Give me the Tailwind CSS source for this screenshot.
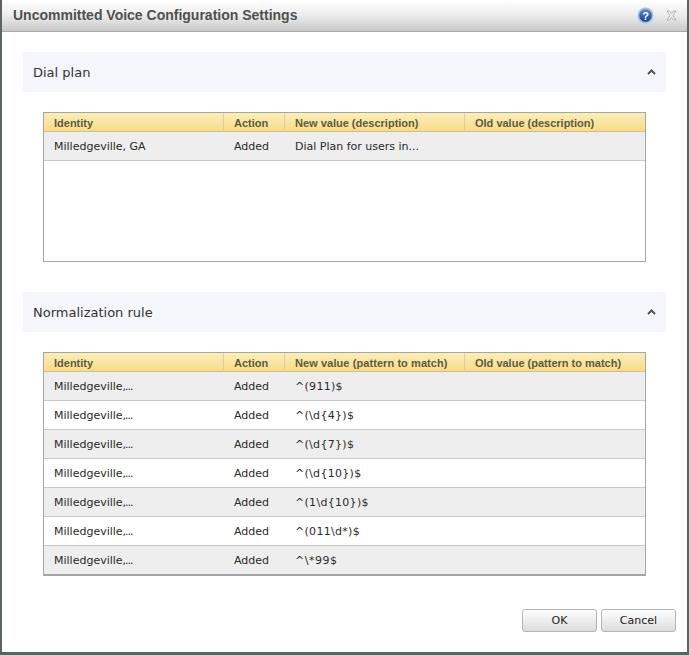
<!DOCTYPE html>
<html>
<head>
<meta charset="utf-8">
<script src="https://cdn.jsdelivr.net/npm/@tailwindcss/browser@4"></script>
</head>
<body class="m-0 bg-[#5c6462]">
<div class="w-[689px] h-[655px] overflow-hidden font-['DejaVu_Sans','Liberation_Sans',sans-serif] text-[#2a2a2a] text-[11px] pl-[2px] pr-[2px] pb-[3px]">
  <div class="h-full bg-white flex flex-col">
    <div class="h-[32px] shrink-0 flex items-center pl-[11px] pr-[10px] border-b border-[#a8a8a8] bg-gradient-to-b from-white via-[#ececec] to-[#c9c9c9]">
      <div class="flex-1 font-['Liberation_Sans',sans-serif] font-bold text-[14px] text-[#505050]">Uncommitted Voice Configuration Settings</div>
      <svg class="w-[17px] h-[17px] mr-[12px]" viewBox="0 0 17 17"><defs><linearGradient id="h" x1="0" y1="0" x2="0" y2="1"><stop offset="0" stop-color="#5f86c8"/><stop offset="1" stop-color="#173f94"/></linearGradient></defs><circle cx="8.500" cy="8.500" r="8" fill="#a9bfe2"/><circle cx="8.500" cy="8.500" r="6.300" fill="url(#h)"/><text x="8.500" y="12.500" text-anchor="middle" font-size="11" font-weight="700" fill="#fff" font-family="Liberation Sans">?</text></svg>
      <svg class="w-[11px] h-[11px]" viewBox="0 0 11 11" fill="#f2f2f2" stroke="#a2a2a2" stroke-width="0.800"><path d="M1 1h2.400l2.100 2.600L7.600 1H10L6.900 5.500 10 10H7.600L5.500 7.400 3.400 10H1l3.100-4.500z"/></svg>
    </div>
    <div class="flex-1 flex flex-col px-[21px] pt-[20px]">
      <div class="w-[643px] h-[40px] shrink-0 bg-[#f5f6fb] flex items-center justify-between pl-[10px] pr-[10px] text-[13px] text-[#333]">
        <span class="pt-[2px]">Dial plan</span>
        <svg class="w-[9px] h-[6px]" viewBox="0 0 9 6" fill="none" stroke="#555" stroke-width="2"><path d="M1 5l3.500-3.500L8 5"/></svg>
      </div>
      <div class="ml-[20px] mt-[20px] w-[603px] h-[150px] border border-[#a6a6a6] shrink-0">
        <div class="grid grid-cols-[180px_61px_180px_1fr] h-[19px] border-b border-[#cdbf8e] bg-gradient-to-b from-[#fbeeb8] to-[#f8dc87] font-['Liberation_Sans',sans-serif] font-bold text-[#5e5a42] items-center">
          <div class="pl-[10px] pt-[2px] border-r border-[#dccf9f] h-full flex items-center">Identity</div>
          <div class="pl-[10px] pt-[2px] border-r border-[#dccf9f] h-full flex items-center">Action</div>
          <div class="pl-[10px] pt-[2px] border-r border-[#dccf9f] h-full flex items-center">New value (description)</div>
          <div class="pl-[10px] pt-[2px] h-full flex items-center">Old value (description)</div>
        </div>
        <div class="grid grid-cols-[180px_61px_180px_1fr] h-[29px] pt-[2px] bg-[#eeeeee] border-b border-[#c8c8c8] items-center">
          <div class="pl-[10px]">Milledgeville, GA</div><div class="pl-[10px]">Added</div><div class="pl-[10px]">Dial Plan for users in...</div><div></div>
        </div>
      </div>
      <div class="mt-[30px] w-[643px] h-[40px] shrink-0 bg-[#f5f6fb] flex items-center justify-between pl-[10px] pr-[10px] text-[13px] text-[#333]">
        <span class="pt-[2px]">Normalization rule</span>
        <svg class="w-[9px] h-[6px]" viewBox="0 0 9 6" fill="none" stroke="#555" stroke-width="2"><path d="M1 5l3.500-3.500L8 5"/></svg>
      </div>
      <div class="ml-[20px] mt-[20px] w-[603px] border border-[#a6a6a6] border-b-2 shrink-0">
        <div class="grid grid-cols-[180px_61px_180px_1fr] h-[19px] border-b border-[#cdbf8e] bg-gradient-to-b from-[#fbeeb8] to-[#f8dc87] font-['Liberation_Sans',sans-serif] font-bold text-[#5e5a42] items-center">
          <div class="pl-[10px] pt-[2px] border-r border-[#dccf9f] h-full flex items-center">Identity</div>
          <div class="pl-[10px] pt-[2px] border-r border-[#dccf9f] h-full flex items-center">Action</div>
          <div class="pl-[10px] pt-[2px] border-r border-[#dccf9f] h-full flex items-center tracking-[0.08px]">New value (pattern to match)</div>
          <div class="pl-[10px] pt-[2px] h-full flex items-center">Old value (pattern to match)</div>
        </div>
        <div class="grid grid-cols-[180px_61px_180px_1fr] h-[29px] pt-[2px] bg-[#eeeeee] border-b border-[#c8c8c8] items-center"><div class="pl-[10px]">Milledgeville<span class="tracking-[-1px]">,...</span></div><div class="pl-[10px]">Added</div><div class="pl-[10px] tracking-[0.3px]">^(911)$</div><div></div></div>
        <div class="grid grid-cols-[180px_61px_180px_1fr] h-[29px] pt-[2px] bg-white border-b border-[#c8c8c8] items-center"><div class="pl-[10px]">Milledgeville<span class="tracking-[-1px]">,...</span></div><div class="pl-[10px]">Added</div><div class="pl-[10px] tracking-[0.3px]">^(\d{4})$</div><div></div></div>
        <div class="grid grid-cols-[180px_61px_180px_1fr] h-[29px] pt-[2px] bg-[#eeeeee] border-b border-[#c8c8c8] items-center"><div class="pl-[10px]">Milledgeville<span class="tracking-[-1px]">,...</span></div><div class="pl-[10px]">Added</div><div class="pl-[10px] tracking-[0.3px]">^(\d{7})$</div><div></div></div>
        <div class="grid grid-cols-[180px_61px_180px_1fr] h-[29px] pt-[2px] bg-white border-b border-[#c8c8c8] items-center"><div class="pl-[10px]">Milledgeville<span class="tracking-[-1px]">,...</span></div><div class="pl-[10px]">Added</div><div class="pl-[10px] tracking-[0.3px]">^(\d{10})$</div><div></div></div>
        <div class="grid grid-cols-[180px_61px_180px_1fr] h-[29px] pt-[2px] bg-[#eeeeee] border-b border-[#c8c8c8] items-center"><div class="pl-[10px]">Milledgeville<span class="tracking-[-1px]">,...</span></div><div class="pl-[10px]">Added</div><div class="pl-[10px] tracking-[0.3px]">^(1\d{10})$</div><div></div></div>
        <div class="grid grid-cols-[180px_61px_180px_1fr] h-[29px] pt-[2px] bg-white border-b border-[#c8c8c8] items-center"><div class="pl-[10px]">Milledgeville<span class="tracking-[-1px]">,...</span></div><div class="pl-[10px]">Added</div><div class="pl-[10px] tracking-[0.3px]">^(011\d*)$</div><div></div></div>
        <div class="grid grid-cols-[180px_61px_180px_1fr] h-[28px] pt-[2px] bg-[#eeeeee] items-center"><div class="pl-[10px]">Milledgeville<span class="tracking-[-1px]">,...</span></div><div class="pl-[10px]">Added</div><div class="pl-[10px] tracking-[0.5px]">^\*99$</div><div></div></div>
      </div>
      <div class="flex justify-end gap-[4px] mt-[33px] w-[653px]">
        <button class="w-[75px] h-[23px] pt-[2px] border border-[#b4b4b4] rounded-[3px] bg-gradient-to-b from-white to-[#dcdcdc] text-[#222]">OK</button>
        <button class="w-[75px] h-[23px] pt-[2px] border border-[#b4b4b4] rounded-[3px] bg-gradient-to-b from-white to-[#dcdcdc] text-[#222]">Cancel</button>
      </div>
    </div>
  </div>
</div>
</body>
</html>
